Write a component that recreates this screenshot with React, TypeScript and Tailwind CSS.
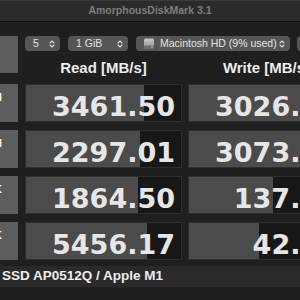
import React from "react";

interface ResultRow {
  label: string;
  sub: string;
  read: string;
  readFill: number;
  write: string;
  writeFill: number;
}

const rows: ResultRow[] = [
  { label: "SEQ1M", sub: "QD8", read: "3461.50", readFill: 118, write: "3026.82", writeFill: 118 },
  { label: "SEQ1M", sub: "QD1", read: "2297.01", readFill: 114, write: "3073.65", writeFill: 118 },
  { label: "RND4K", sub: "QD64", read: "1864.50", readFill: 112, write: "137.40", writeFill: 84 },
  { label: "RND4K", sub: "QD1", read: "5456.17", readFill: 121, write: "42.21", writeFill: 70 },
];

function UpDown() {
  return (
    <svg width="6" height="10" viewBox="0 0 6 10" className="shrink-0">
      <path d="M1 4 L3 2 L5 4 M1 6 L3 8 L5 6" fill="none" stroke="#d8d8d8" strokeWidth="1.1" strokeLinecap="round" strokeLinejoin="round" />
    </svg>
  );
}

function DiskIcon() {
  return (
    <svg width="12" height="11" viewBox="0 0 12 11" className="shrink-0">
      <defs>
        <linearGradient id="disk" x1="0" y1="0" x2="0" y2="1">
          <stop offset="0" stopColor="#c9c9c9" />
          <stop offset="1" stopColor="#8d8d8d" />
        </linearGradient>
      </defs>
      <rect x="1" y="0.5" width="10" height="10" rx="1.5" fill="url(#disk)" />
      <rect x="1" y="7.5" width="10" height="3" rx="1" fill="#6f6f6f" />
      <circle cx="9" cy="9" r="0.7" fill="#cfcfcf" />
    </svg>
  );
}

function Dropdown({ width, children }: { width: string; children: React.ReactNode }) {
  return (
    <div className={`${width} h-[15px] shrink-0 rounded-[4px] bg-[#565656] flex items-center justify-between pl-[8px] pr-[5px] text-[10.5px] text-[#e2e2e2] whitespace-nowrap`}>
      {children}
    </div>
  );
}

function ValueCell({ value, fill }: { value: string; fill: number }) {
  return (
    <div className="relative w-[157px] h-[38px] shrink-0 bg-[#171717] border border-[#2d2d2d] flex items-center justify-end pr-[6px] pt-[6px]">
      {/* bar under the number */}
      <div className="absolute left-0 top-0 bottom-0 bg-[#4b4b4b]" style={{ width: fill }} />
      <span className="relative text-[27px] leading-none font-bold text-[#e6e6e6] font-['DejaVu_Sans',sans-serif]">
        {value}
      </span>
    </div>
  );
}

export default function App() {
  return (
    <div className="w-[300px] h-[300px] overflow-hidden bg-[#1f1f1f] font-['Liberation_Sans',Arial,sans-serif]">
      {/* Title bar */}
      <div className="h-[22px] bg-[#2b2b2b] border-t border-[#383b42] border-b border-b-[#111] flex items-center justify-center">
        <span className="text-[10.5px] font-bold text-[#7d7d7d]">AmorphousDiskMark 3.1</span>
      </div>

      {/* Header */}
      <div className="flex mt-[14px] w-[400px]">
        <div className="w-[18px] h-[37px] bg-[#5d5d5d] shrink-0" />
        <div className="ml-[7px] flex flex-col">
          <div className="flex gap-[8px]">
            <Dropdown width="w-[35px]">
              <span>5</span>
              <UpDown />
            </Dropdown>
            <Dropdown width="w-[60px]">
              <span>1 GiB</span>
              <UpDown />
            </Dropdown>
            <Dropdown width="w-[154px]">
              <span className="flex items-center gap-[3px] -ml-[1px]">
                <DiskIcon />
                <span className="ml-[2px]">Macintosh HD (9% used)</span>
              </span>
              <UpDown />
            </Dropdown>
            <div className="w-[60px] h-[15px] -ml-[1px] rounded-[4px] bg-[#565656]" />
          </div>
          <div className="flex gap-[6px] mt-[8px] text-[15px] leading-[17px] font-bold text-[#ececec]">
            <div className="w-[157px] text-center">Read [MB/s]</div>
            <div className="w-[157px] text-center">Write [MB/s]</div>
          </div>
        </div>
      </div>

      {/* Results */}
      <div className="flex flex-col gap-[8px] mt-[8px] w-[400px]">
        {rows.map((r, i) => (
          <div key={i} className="flex">
            <div className="w-[18px] h-[38px] shrink-0 bg-[#5d5d5d] overflow-hidden flex justify-end items-center pr-[16px]">
              <div className="shrink-0 whitespace-nowrap text-center text-[11px] leading-[12px] font-bold text-white">
                <div>{r.label}</div>
                <div>{r.sub}</div>
              </div>
            </div>
            <div className="ml-[7px]">
              <ValueCell value={r.read} fill={r.readFill} />
            </div>
            <div className="ml-[6px]">
              <ValueCell value={r.write} fill={r.writeFill} />
            </div>
          </div>
        ))}
      </div>

      {/* Device info */}
      <div className="mt-[6px] h-[21px] w-[400px] bg-[#2a2a2a] flex items-center pl-[2px]">
        <span className="text-[13.5px] font-bold text-[#ececec] whitespace-nowrap">SSD AP0512Q / Apple M1</span>
      </div>
    </div>
  );
}
